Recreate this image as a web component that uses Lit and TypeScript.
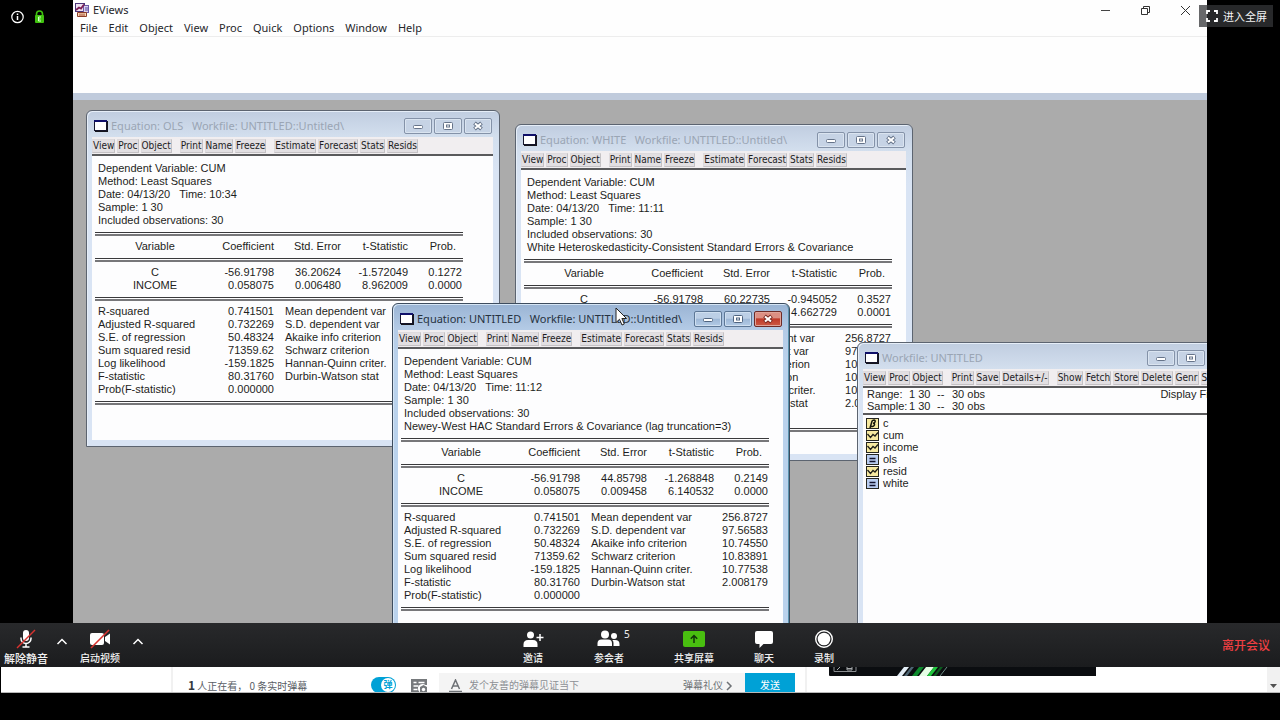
import { LitElement, html, css, svg } from "lit";
import { customElement, property } from "lit/decorators.js";
import { styleMap } from "lit/directives/style-map.js";

interface Equation {
  id: string;
  title: string;
  active?: boolean;
  x: number;
  y: number;
  width: number;
  height: number;
  header: string[];
  coefs: string[][];
}

const SUMMARY: string[][] = [
  ["R-squared", "0.741501", "Mean dependent var", "256.8727"],
  ["Adjusted R-squared", "0.732269", "S.D. dependent var", "97.56583"],
  ["S.E. of regression", "50.48324", "Akaike info criterion", "10.74550"],
  ["Sum squared resid", "71359.62", "Schwarz criterion", "10.83891"],
  ["Log likelihood", "-159.1825", "Hannan-Quinn criter.", "10.77538"],
  ["F-statistic", "80.31760", "Durbin-Watson stat", "2.008179"],
  ["Prob(F-statistic)", "0.000000", "", ""],
];

const EQ_TOOLS = [
  ["View", "Proc", "Object"],
  ["Print", "Name", "Freeze"],
  ["Estimate", "Forecast", "Stats", "Resids"],
];

const WF_TOOLS = [
  ["View", "Proc", "Object"],
  ["Print", "Save", "Details+/-"],
  ["Show", "Fetch", "Store", "Delete", "Genr", "Sample"],
];

const EQUATIONS: Equation[] = [
  {
    id: "ols",
    title: "Equation: OLS   Workfile: UNTITLED::Untitled\\",
    x: 13, y: 10, width: 414, height: 337,
    header: [
      "Dependent Variable: CUM",
      "Method: Least Squares",
      "Date: 04/13/20   Time: 10:34",
      "Sample: 1 30",
      "Included observations: 30",
    ],
    coefs: [
      ["C", "-56.91798", "36.20624", "-1.572049", "0.1272"],
      ["INCOME", "0.058075", "0.006480", "8.962009", "0.0000"],
    ],
  },
  {
    id: "white",
    title: "Equation: WHITE   Workfile: UNTITLED::Untitled\\",
    x: 442, y: 24, width: 398, height: 337,
    header: [
      "Dependent Variable: CUM",
      "Method: Least Squares",
      "Date: 04/13/20   Time: 11:11",
      "Sample: 1 30",
      "Included observations: 30",
      "White Heteroskedasticity-Consistent Standard Errors & Covariance",
    ],
    coefs: [
      ["C", "-56.91798", "60.22735", "-0.945052", "0.3527"],
      ["INCOME", "0.058075", "0.012456", "4.662729", "0.0001"],
    ],
  },
];

const ACTIVE_EQUATION: Equation = {
  id: "newey",
  title: "Equation: UNTITLED   Workfile: UNTITLED::Untitled\\",
  active: true,
  x: 319, y: 203, width: 398, height: 350,
  header: [
    "Dependent Variable: CUM",
    "Method: Least Squares",
    "Date: 04/13/20   Time: 11:12",
    "Sample: 1 30",
    "Included observations: 30",
    "Newey-West HAC Standard Errors & Covariance (lag truncation=3)",
  ],
  coefs: [
    ["C", "-56.91798", "44.85798", "-1.268848", "0.2149"],
    ["INCOME", "0.058075", "0.009458", "6.140532", "0.0000"],
  ],
};

const OBJECTS: [string, string][] = [
  ["coef", "c"],
  ["series", "cum"],
  ["series", "income"],
  ["equation", "ols"],
  ["series", "resid"],
  ["equation", "white"],
];

/** Framed child window with title bar, caption buttons and a button row. */
@customElement("mdi-window")
export class MdiWindow extends LitElement {
  @property() caption = "";
  @property({ type: Boolean, reflect: true }) active = false;
  @property({ attribute: false }) tools: string[][] = [];

  static styles = css`
    :host {
      display: flex;
      flex-direction: column;
      box-sizing: border-box;
      padding: 0 6px 6px 5px;
      border: 1px solid #5c6470;
      border-radius: 6px 6px 0 0;
      background: linear-gradient(#c0cde0, #d3dfee 26px, #d9e4f4 60px);
      box-shadow: inset 1px 1px 0 #e6eef8;
      overflow: hidden;
    }
    :host([active]) {
      border-color: #3d4c5e;
      background: linear-gradient(#9ab4d4, #b4cbe6 26px, #bad2ec 60px);
      box-shadow: inset 1px 1px 0 #d5e5f5, inset -1px 0 0 #5b93ad;
    }
    .title {
      display: flex;
      align-items: center;
      height: 22px;
      padding: 4px 1px 0 2px;
      flex: none;
    }
    .doc {
      width: 14px;
      height: 12px;
      margin-right: 3px;
      flex: none;
    }
    .caption {
      flex: 1;
      margin: 0;
      font: 400 11px/16px "Noto Sans", sans-serif;
      white-space: pre;
      color: #9aa5b4;
      min-width: 0;
    }
    :host([active]) .caption {
      color: #26323f;
    }
    .buttons {
      display: flex;
      gap: 2px;
      flex: none;
    }
    .buttons button {
      display: grid;
      place-items: center;
      width: 28px;
      height: 16px;
      padding: 0;
      border: 1px solid #8492a8;
      border-radius: 2px;
      background: #c6d3e5;
      box-shadow: inset 0 0 0 1px #dae4f0;
    }
    :host([active]) .buttons button {
      border-color: #5d7796;
      background: linear-gradient(#bccfe6 45%, #9db7d6 50%, #b3cbe6);
      box-shadow: inset 0 0 0 1px #cfdff0;
    }
    :host([active]) .buttons .close {
      border-color: #6d2a26;
      background: linear-gradient(#dc8f83 40%, #bf3a29 50%, #cc5a45);
      box-shadow: inset 0 0 0 1px #e0a398;
    }
    .tools {
      display: flex;
      align-items: center;
      gap: 8px;
      height: 17px;
      background: #f1eef0;
      border-bottom: 2px solid #5a5a5c;
      overflow: hidden;
      flex: none;
    }
    .group {
      display: flex;
      gap: 2px;
      flex: none;
    }
    .group button {
      height: 14px;
      padding: 0;
      border: 1px solid #c4c1c4;
      border-top-color: #dddadd;
      border-left-color: #dddadd;
      background: #e2dfe2;
      font: 400 10px/12px "DejaVu Sans Condensed", "DejaVu Sans", sans-serif;
      font-stretch: condensed;
      color: #1c1c1e;
      white-space: nowrap;
    }
    .client {
      flex: 1;
      background: #fdfdfe;
      overflow: hidden;
    }
  `;

  render() {
    const ink = this.active ? "#4f6480" : "#66748a";
    return html`
      <div class="title">
        <svg class="doc" viewBox="0 0 14 12" aria-hidden="true">
          <rect x="1" y="1" width="13" height="11" fill="#15151c" />
          <rect x="0" y="0" width="13" height="11" fill="#15152a" />
          <rect x="0" y="0" width="13" height="2" fill="#10106a" />
          <rect x="1" y="2" width="11" height="8" fill="#fff" />
        </svg>
        <h2 class="caption">${this.caption}</h2>
        <div class="buttons">
          <button aria-label="Minimize">
            <svg width="12" height="10" viewBox="0 0 12 10">
              <rect x="1.5" y="4.5" width="9" height="3" rx="1" fill="#fff" stroke=${ink} />
            </svg>
          </button>
          <button aria-label="Maximize">
            <svg width="12" height="10" viewBox="0 0 12 10">
              <rect x="1.5" y="1.5" width="9" height="7" rx="1" fill="#fff" stroke=${ink} />
              <rect x="4.5" y="4" width="3" height="2" fill="none" stroke=${ink} />
            </svg>
          </button>
          <button class="close" aria-label="Close">
            <svg width="12" height="10" viewBox="0 0 12 10">
              <path d="M2.500 2 L9.500 8 M9.500 2 L2.500 8" stroke=${this.active ? "#7a2a22" : ink} stroke-width="4" />
              <path d="M3 2.400 L9 7.600 M9 2.400 L3 7.600" stroke="#fff" stroke-width="2" />
            </svg>
          </button>
        </div>
      </div>
      <div class="tools" role="toolbar">
        ${this.tools.map(
          (g) => html`<div class="group">${g.map((t) => html`<button>${t}</button>`)}</div>`
        )}
      </div>
      <div class="client"><slot></slot></div>
    `;
  }
}

/** Regression output: header lines, coefficient table and summary statistics. */
@customElement("equation-output")
export class EquationOutput extends LitElement {
  @property({ attribute: false }) eq!: Equation;

  static styles = css`
    :host {
      display: block;
      width: 368px;
      padding: 6px 0 0 3px;
      font: 400 11px/13px "Liberation Sans", Arial, sans-serif;
      color: #1e1e22;
    }
    .line {
      margin: 0;
      padding-left: 3px;
      white-space: pre;
    }
    table {
      width: 100%;
      table-layout: fixed;
      border-collapse: collapse;
    }
    .name { width: 120px; }
    .coef { width: 59px; }
    .stat { width: 67px; }
    .label { width: 111px; }
    .value { width: 68px; }
    th, td {
      padding: 0;
      height: 13px;
      font-weight: 400;
      text-align: right;
      white-space: nowrap;
    }
    .coefs th:first-child {
      text-align: center;
    }
    .coefs thead th:last-child {
      padding-right: 7px;
    }
    .coefs td:last-child, .summary td:last-child {
      padding-right: 1px;
    }
    .summary th {
      text-align: left;
      padding-left: 3px;
    }
    .summary td + th {
      padding-left: 11px;
    }
    .rule {
      height: 4px;
      margin: 5px 0 4px;
      box-sizing: border-box;
      border-top: 1px solid #3a3a3c;
      border-bottom: 2px solid #77777a;
    }
  `;

  render() {
    const e = this.eq;
    return html`
      ${e.header.map((l) => html`<p class="line">${l}</p>`)}
      <div class="rule"></div>
      <table class="coefs">
        <colgroup>
          <col class="name" /><col class="coef" /><col class="stat" /><col class="stat" /><col />
        </colgroup>
        <thead>
          <tr>
            <th scope="col">Variable</th><th scope="col">Coefficient</th><th scope="col">Std. Error</th>
            <th scope="col">t-Statistic</th><th scope="col">Prob.</th>
          </tr>
        </thead>
      </table>
      <div class="rule"></div>
      <table class="coefs">
        <colgroup>
          <col class="name" /><col class="coef" /><col class="stat" /><col class="stat" /><col />
        </colgroup>
        <tbody>
          ${e.coefs.map(
            (r) => html`<tr>
              <th scope="row">${r[0]}</th>
              ${r.slice(1).map((v) => html`<td>${v}</td>`)}
            </tr>`
          )}
        </tbody>
      </table>
      <div class="rule"></div>
      <table class="summary">
        <colgroup>
          <col class="label" /><col class="value" /><col /><col class="value" />
        </colgroup>
        <tbody>
          ${SUMMARY.map(
            (r) => html`<tr>
              <th scope="row">${r[0]}</th><td>${r[1]}</td>
              ${r[2] ? html`<th scope="row">${r[2]}</th><td>${r[3]}</td>` : html`<td></td><td></td>`}
            </tr>`
          )}
        </tbody>
      </table>
      <div class="rule"></div>
    `;
  }
}

/** Contents of the workfile window. */
@customElement("workfile-view")
export class WorkfileView extends LitElement {
  static styles = css`
    :host {
      display: block;
      font: 400 11px/12px "Liberation Sans", Arial, sans-serif;
      color: #1e1e22;
    }
    .info {
      display: flex;
      justify-content: space-between;
      padding: 0 9px 1px 4px;
      border-bottom: 2px solid #5a5a5c;
    }
    .range {
      display: grid;
      grid-template-columns: 42px 28px 15px auto;
      margin: 0;
    }
    .range span { white-space: nowrap; }
    .list {
      margin: 0;
      padding: 2px 0 0 3px;
      list-style: none;
    }
    .list li {
      display: flex;
      gap: 4px;
      align-items: center;
      height: 12px;
    }
    .icon {
      width: 13px;
      height: 11px;
      flex: none;
    }
  `;

  private icon(kind: string) {
    const fill = kind === "equation" ? "#b9cdf0" : "#f6e9a0";
    return html`<svg class="icon" viewBox="0 0 13 11" aria-hidden="true">
      <rect x="0.5" y="0.5" width="12" height="10" fill=${fill} stroke="#26261e" />
      ${kind === "equation"
        ? svg`<path d="M3.500 4.500h6M3.500 7.500h6" stroke="#10102a" stroke-width="1.400" />`
        : kind === "series"
          ? svg`<path d="M1.500 4L4.500 7.500L7 4.500L9 6L12 2.500" fill="none" stroke="#20201a" stroke-width="1.300" />`
          : svg`<path d="M4 10L6 3.200Q6.600 2 8 2Q9.600 2.200 9 4Q8.600 5.200 7 5.200Q9 5.400 8.400 7.200Q7.400 9 5 8.200" fill="none" stroke="#16160c" stroke-width="1.500" />`}
    </svg>`;
  }

  render() {
    return html`
      <div class="info">
        <div class="range">
          <span>Range:</span><span>1 30</span><span>--</span><span>30 obs</span>
          <span>Sample:</span><span>1 30</span><span>--</span><span>30 obs</span>
        </div>
        <span>Display Filter:</span>
      </div>
      <ul class="list">
        ${OBJECTS.map(([k, n]) => html`<li>${this.icon(k)}<span>${n}</span></li>`)}
      </ul>
    `;
  }
}

@customElement("eviews-app")
export class EviewsApp extends LitElement {
  static styles = css`
    :host {
      display: flex;
      flex-direction: column;
      min-width: 0;
      overflow: hidden;
      background: #fefefe;
      color: #26262a;
      font: 400 11px/16px "Noto Sans", sans-serif;
    }
    .titlebar {
      display: flex;
      align-items: center;
      height: 20px;
      padding: 0 16px 0 2px;
      flex: none;
    }
    .logo { width: 14px; height: 14px; margin-right: 4px; }
    .name { flex: 1; margin: 0; font: inherit; }
    .win { display: flex; gap: 28px; }
    .win button {
      display: grid;
      place-items: center;
      width: 12px;
      height: 12px;
      padding: 0;
      border: 0;
      background: none;
    }
    .menu {
      display: flex;
      height: 16px;
      padding-left: 2px;
      border-bottom: 1px solid #ededed;
      flex: none;
    }
    .menu button {
      padding: 0 6px 0 5px;
      border: 0;
      background: none;
      font: inherit;
      color: inherit;
    }
    .blank { height: 56px; flex: none; }
    .band { height: 7px; background: #c0cbdc; flex: none; }
    .desk {
      position: relative;
      flex: 1;
      background: #ababab;
      overflow: hidden;
    }
    mdi-window { position: absolute; }
    .pointer {
      position: absolute;
      left: 542px;
      top: 207px;
      width: 13px;
      height: 19px;
    }
  `;

  private frame(e: Equation) {
    return html`<mdi-window
      .caption=${e.title}
      ?active=${e.active}
      .tools=${EQ_TOOLS}
      style=${styleMap({ left: `${e.x}px`, top: `${e.y}px`, width: `${e.width}px`, height: `${e.height}px` })}
    >
      <equation-output .eq=${e}></equation-output>
    </mdi-window>`;
  }

  render() {
    return html`
      <div class="titlebar">
        <svg class="logo" viewBox="0 0 14 14" aria-hidden="true">
          <rect x="0.5" y="0.5" width="9" height="8" fill="#efe3f2" stroke="#4a3578" />
          <rect x="8.5" y="2.5" width="5" height="7" fill="#d9d0ee" stroke="#6a5aa8" />
          <path d="M1 7L4 4.5L6 5.5L9 1.5" fill="none" stroke="#7c1f56" stroke-width="1.8" />
          <path d="M10 5h3M10 7h3" stroke="#5949a0" />
          <path d="M2.5 13.5v-4h9v4z" fill="#f6d9b8" stroke="#8c3c26" />
          <path d="M5 13v-2.500M7 13v-2.500M9 13v-2.500" stroke="#a1402a" />
        </svg>
        <h1 class="name">EViews</h1>
        <div class="win">
          <button aria-label="Minimize">
            <svg width="11" height="11"><path d="M1 5.500h9" stroke="#444" /></svg>
          </button>
          <button aria-label="Restore">
            <svg width="11" height="11" fill="none" stroke="#333">
              <path d="M1.500 3.500h6v6h-6z M3.500 3.500v-2h6v6h-2" />
            </svg>
          </button>
          <button aria-label="Close">
            <svg width="11" height="11"><path d="M1 1L10 10M10 1L1 10" stroke="#333" /></svg>
          </button>
        </div>
      </div>
      <nav class="menu">
        ${["File", "Edit", "Object", "View", "Proc", "Quick", "Options", "Window", "Help"].map(
          (m) => html`<button>${m}</button>`
        )}
      </nav>
      <div class="blank"></div>
      <div class="band"></div>
      <main class="desk">
        ${EQUATIONS.map((e) => this.frame(e))}
        <mdi-window
          .caption=${"Workfile: UNTITLED"}
          .tools=${WF_TOOLS}
          style=${styleMap({ left: "784px", top: "242px", width: "386px", height: "337px" })}
        >
          <workfile-view></workfile-view>
        </mdi-window>
        ${this.frame(ACTIVE_EQUATION)}
        <svg class="pointer" viewBox="0 0 13 19" aria-hidden="true">
          <path d="M1 1V15.500L4.500 12.300L7 18L9.300 17L6.900 11.500H11.500Z" fill="#fff" stroke="#222" />
        </svg>
      </main>
    `;
  }
}

@customElement("meeting-bar")
export class MeetingBar extends LitElement {
  static styles = css`
    :host {
      display: flex;
      justify-content: space-between;
      align-items: stretch;
      height: 44px;
      flex: none;
      background: linear-gradient(#28292b, #1b1c1e);
      font: 500 10px/12px "Noto Sans CJK SC", sans-serif;
      color: #f2f2f2;
    }
    .set { display: flex; }
    button {
      display: flex;
      flex-direction: column;
      align-items: center;
      gap: 2px;
      padding: 5px 0 0;
      border: 0;
      background: none;
      font: inherit;
      color: inherit;
      white-space: nowrap;
    }
    button svg { display: block; height: 22px; }
    .audio { width: 52px; font-size: 11px; }
    .more { width: 20px; }
    .video { width: 56px; }
    .center { margin-right: 14px; gap: 40px; }
    .people { position: relative; margin: 0 10px; }
    .count {
      position: absolute;
      left: 30px;
      top: 5px;
      font: 400 10px/12px "Noto Sans", sans-serif;
    }
    .leave {
      justify-content: center;
      padding: 0 10px 0 0;
      font-size: 12px;
      color: #ef3f42;
    }
  `;

  private more(label: string) {
    return html`<button class="more" aria-label=${label}>
      <svg width="12" height="22" viewBox="0 0 12 22">
        <path d="M1.500 16L6 11.500L10.500 16" fill="none" stroke="#fff" stroke-width="1.500" />
      </svg>
    </button>`;
  }

  render() {
    return html`
      <div class="set">
        <button class="audio">
          <svg width="22" height="22" viewBox="0 0 22 22">
            <rect x="8" y="2" width="6" height="11" rx="3" fill="#fff" />
            <path d="M6 9.500v1a5 5 0 0 0 10 0v-1M11 15.500v3M7.500 19h7" fill="none" stroke="#fff" stroke-width="1.500" />
            <path d="M2 20L20 2" stroke="#d8322f" stroke-width="1.400" />
          </svg>
          <span>解除静音</span>
        </button>
        ${this.more("音频选项")}
        <button class="video">
          <svg width="24" height="22" viewBox="0 0 24 22">
            <rect x="2" y="5" width="14" height="12" rx="2" fill="#fff" />
            <path d="M17 9L22 5.500V16.500L17 13Z" fill="#fff" />
            <path d="M3 20L21 2" stroke="#d8322f" stroke-width="1.600" />
          </svg>
          <span>启动视频</span>
        </button>
        ${this.more("视频选项")}
      </div>
      <div class="set center">
        <button>
          <svg width="22" height="22" viewBox="0 0 22 22" fill="#fff">
            <circle cx="8.500" cy="7" r="3.500" />
            <path d="M1.500 19v-2.500q0-4.500 4.500-4.500h5q4.500 0 4.500 4.500V19z" />
            <path d="M18 6v7M14.500 9.500h7" stroke="#fff" stroke-width="1.500" />
          </svg>
          <span>邀请</span>
        </button>
        <button class="people">
          <svg width="26" height="22" viewBox="0 0 26 22" fill="#fff">
            <circle cx="9" cy="6.500" r="4" />
            <path d="M1.500 18v-2.500q0-4 4-4h6.500q4 0 4 4V18z" />
            <circle cx="18" cy="8" r="3" />
            <path d="M17.500 18v-3q0-2-1.200-3h2.700q4.500 0 4.500 4V18z" />
          </svg>
          <span>参会者</span>
          <span class="count">5</span>
        </button>
        <button>
          <svg width="22" height="22" viewBox="0 0 22 22">
            <rect x="0" y="3" width="22" height="16" rx="2" fill="#49bf10" />
            <path d="M11 15V8M7.800 10.800L11 7.500L14.200 10.800" fill="none" stroke="#12330a" stroke-width="1.500" />
          </svg>
          <span>共享屏幕</span>
        </button>
        <button>
          <svg width="20" height="22" viewBox="0 0 20 22" fill="#fff">
            <path d="M3 3h14q2 0 2 2v9q0 2-2 2H9.500L5.500 20V16H3q-2 0-2-2V5q0-2 2-2z" />
          </svg>
          <span>聊天</span>
        </button>
        <button>
          <svg width="20" height="22" viewBox="0 0 20 22">
            <circle cx="10" cy="11" r="8.300" fill="none" stroke="#fff" stroke-width="1.400" />
            <circle cx="10" cy="11" r="6.300" fill="#fff" />
          </svg>
          <span>录制</span>
        </button>
      </div>
      <button class="leave">离开会议</button>
    `;
  }
}

/** Danmaku controls of the video page behind the meeting. */
@customElement("player-strip")
export class PlayerStrip extends LitElement {
  static styles = css`
    :host {
      display: flex;
      box-sizing: border-box;
      height: 26px;
      flex: none;
      overflow: hidden;
      margin-left: 1px;
      background: #fff;
      border-bottom: 1px solid #b8b8b8;
      font: 400 10px/24px "Noto Sans CJK SC", sans-serif;
      color: #5a6066;
    }
    .player {
      display: flex;
      align-items: flex-start;
      box-sizing: border-box;
      width: 636px;
      margin-left: 170px;
      padding: 6px 10px 0 15px;
      border: solid #f1f1f1;
      border-width: 0 2px;
    }
    .watch { flex: 1; white-space: pre; }
    .watch b { font-size: 12px; color: #33383c; }
    .toggle {
      position: relative;
      display: block;
      width: 25px;
      height: 16px;
      margin: 4px 14px 0 0;
    }
    .toggle input {
      appearance: none;
      display: block;
      width: 25px;
      height: 16px;
      margin: 0;
      border-radius: 8px;
      background: #00a1d6;
    }
    .knob {
      position: absolute;
      right: 1px;
      top: 1px;
      width: 14px;
      height: 14px;
      border-radius: 7px;
      background: #fff;
      color: #00a1d6;
      font: 700 9px/14px "Noto Sans CJK SC", sans-serif;
      text-align: center;
    }
    .settings {
      margin: 5px 11px 0 0;
      padding: 0;
      border: 0;
      background: none;
      line-height: 0;
    }
    .entry {
      display: flex;
      align-items: flex-start;
      width: 306px;
      height: 26px;
      padding-left: 10px;
      box-sizing: border-box;
      background: #f4f4f4;
    }
    .entry svg { margin-top: 6px; }
    .entry input {
      flex: 1;
      min-width: 0;
      height: 24px;
      padding: 0 0 0 7px;
      border: 0;
      background: none;
      font: inherit;
      color: #666;
    }
    .entry input::placeholder { color: #8d9094; }
    .entry a {
      display: flex;
      margin-right: 12px;
      color: #6d7175;
      text-decoration: none;
    }
    .send {
      width: 50px;
      height: 24px;
      padding: 0;
      border: 0;
      background: #00a1d6;
      color: #fff;
      font: inherit;
    }
    .ad {
      width: 267px;
      height: 9px;
      margin-left: 22px;
    }
    .scroll {
      display: grid;
      place-items: center;
      width: 13px;
      margin-left: auto;
      padding-top: 12px;
      background: #f1f1f1;
    }
  `;

  render() {
    return html`
      <div class="player">
        <span class="watch"><b>1</b> 人正在看， 0 条实时弹幕</span>
        <label class="toggle">
          <input type="checkbox" checked aria-label="弹幕开关" />
          <span class="knob">弹</span>
        </label>
        <button class="settings" aria-label="弹幕设置">
          <svg width="18" height="16" viewBox="0 0 18 16">
            <path d="M1 1h16v6h-1.500a4 4 0 0 0-6 7H1z" fill="#76797c" />
            <path d="M3.500 4.500h3M3.500 8h5M8.500 4.500h6M3.500 11.500h4" stroke="#fff" stroke-width="1.300" />
            <path d="M13.500 7l3.500 2v5l-3.500 2l-3.500-2v-5z" fill="#76797c" />
            <circle cx="13.500" cy="11.500" r="1.700" fill="#fff" />
          </svg>
        </button>
        <div class="entry">
          <svg width="13" height="14" viewBox="0 0 13 14">
            <path d="M2.500 10L6.500 1L10.500 10M4 7h5" fill="none" stroke="#6d7175" stroke-width="1.500" />
            <path d="M0 12.500h13" stroke="#6d7175" stroke-width="1.500" />
          </svg>
          <input type="text" placeholder="发个友善的弹幕见证当下" aria-label="弹幕" />
          <a href="#etiquette">弹幕礼仪
            <svg width="10" height="14" viewBox="0 0 10 14">
              <path d="M4 3L8 7L4 11" fill="none" stroke="#6d7175" stroke-width="1.500" />
            </svg>
          </a>
        </div>
        <button class="send">发送</button>
      </div>
      <svg class="ad" viewBox="0 0 267 9" role="img" aria-label="广告">
        <path d="M0 0h267v9H1q-1 0-1-1z" fill="#0b0d10" />
        <path d="M5 0v4.500h22V0" fill="none" stroke="#8a8d90" />
        <path d="M11 0L8 3M18 0v3h5V0M18 1.500h5" fill="none" stroke="#a5a8aa" />
        <path d="M75 0h5l-7 9h-5z" fill="#e4eef6" />
        <path d="M82 0h3l-7 9h-3z" fill="#4c6472" />
        <path d="M90 0h5l-7 9h-5z" fill="#0c8a2c" />
        <path d="M97 0h8l-7 9h-8z" fill="#e6ffe6" />
        <path d="M105 0h4l-7 9h-4z" fill="#1fc63c" />
        <path d="M111 0h3l-7 9h-3z" fill="#0b5c1e" />
        <path d="M118 0l-7 9" stroke="#6d8a84" />
      </svg>
      <div class="scroll">
        <svg width="7" height="4" aria-hidden="true"><path d="M0 0h7L3.500 4z" fill="#505050" /></svg>
      </div>
    `;
  }
}

@customElement("app-root")
export class AppRoot extends LitElement {
  static styles = css`
    :host {
      display: flex;
      flex-direction: column;
      box-sizing: border-box;
      height: 100vh;
      padding-bottom: 27px;
      background: #000;
      overflow: hidden;
    }
    .stage {
      position: relative;
      display: grid;
      grid-template-columns: 73px minmax(0, 1fr) 73px;
      grid-template-rows: minmax(0, 1fr);
      flex: 1;
      min-height: 0;
    }
    .status {
      display: flex;
      align-items: flex-start;
      gap: 10px;
      padding: 10px 0 0 11px;
    }
    .full {
      position: absolute;
      top: 5px;
      right: 7px;
      display: flex;
      align-items: center;
      gap: 5px;
      height: 22px;
      padding: 0 6px 0 7px;
      border: 0;
      background: rgba(52, 53, 56, 0.75);
      color: #f4f4f4;
      font: 400 11px/22px "Noto Sans CJK SC", sans-serif;
    }
  `;

  render() {
    return html`
      <div class="stage">
        <div class="status">
          <svg width="13" height="14" viewBox="0 0 13 14" role="img" aria-label="会议信息">
            <circle cx="6.500" cy="7" r="5.700" fill="none" stroke="#fff" stroke-width="1.200" />
            <path d="M6.500 6v4M6.500 3.500v1.500" stroke="#fff" stroke-width="1.500" />
          </svg>
          <svg width="11" height="14" viewBox="0 0 11 14" role="img" aria-label="已加密">
            <path d="M2.500 7V4a3 3 0 0 1 6 0v3" fill="none" stroke="#3fc20e" stroke-width="1.600" />
            <rect x="1" y="5" width="9" height="8" rx="1" fill="#3fc20e" />
            <path d="M7 7H4.500v4H7M4.500 9h2" fill="none" stroke="#d9ffd0" />
          </svg>
        </div>
        <eviews-app></eviews-app>
        <button class="full">
          <svg width="12" height="12" viewBox="0 0 12 12" aria-hidden="true">
            <path d="M1 4V1H4M8 1H11V4M11 8V11H8M4 11H1V8" fill="none" stroke="#fff" stroke-width="1.800" />
          </svg>
          <span>进入全屏</span>
        </button>
      </div>
      <meeting-bar></meeting-bar>
      <player-strip></player-strip>
    `;
  }
}
